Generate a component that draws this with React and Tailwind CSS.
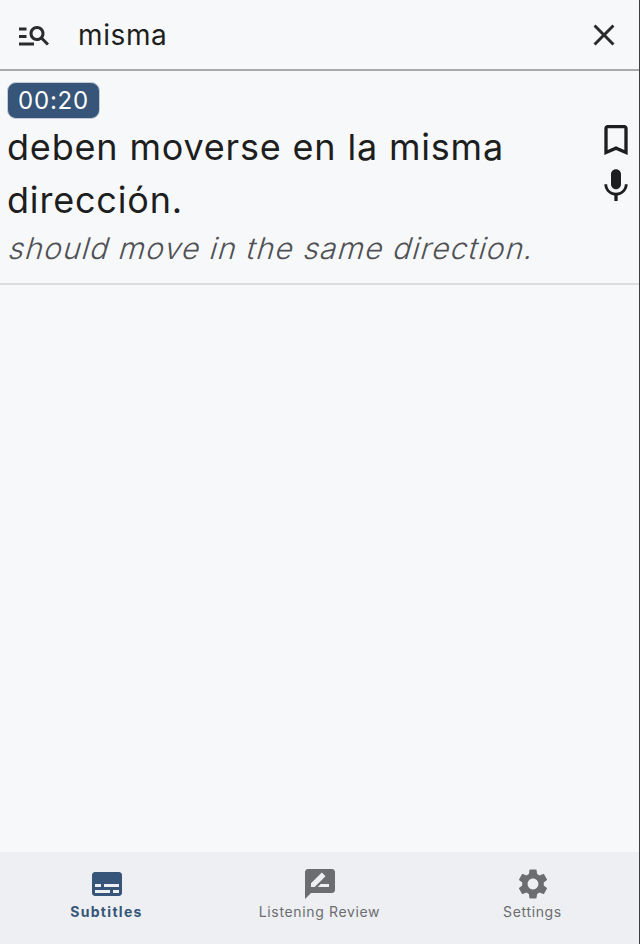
import React from "react";
import { MdManageSearch, MdClose, MdBookmarkBorder, MdMic, MdSubtitles, MdRateReview, MdSettings } from "react-icons/md";

function Tab({ icon, label, active }) {
  return (
    <div className={"flex flex-1 flex-col items-center pt-[14px] " + (active ? "text-[#365578]" : "text-[#6b6d70]")}>
      {icon}
      <span className={"text-[14px] leading-[20px] " + (active ? "font-bold tracking-[1.3px]" : "font-normal tracking-[0.65px]")}>{label}</span>
    </div>
  );
}

export default function App() {
  return (
    <div className="flex h-[944px] w-[640px] flex-col border-r border-[#3d3e40] bg-[#f7f8fa] font-['Inter',sans-serif] text-[#1d1e20]">
      <header className="flex h-[71px] items-center border-b-2 border-[#a9aaac] pl-[16px] pr-[17px]">
        <MdManageSearch size={36} className="text-[#2a2b2d]" />
        <span className="ml-[26px] flex-1 text-[28px] leading-[36px] tracking-[0.6px]">misma</span>
        <MdClose size={36} className="text-[#2a2b2d]" />
      </header>
      <section className="flex border-b-2 border-[#dcdddf] pb-[14px] pl-[7px] pr-[3px] pt-[11px]">
        <div className="flex-1">
          <span className="inline-block h-[37px] rounded-[9px] border border-[#c3ccd6] bg-[#365578] px-[10px] text-[24px] leading-[35px] tracking-[0.8px] text-white">00:20</span>
          <p className="mt-[2px] text-[36px] leading-[53px] tracking-[0.82px]">deben moverse en la misma dirección.</p>
          <p className="-ml-[3px] origin-bottom-left -skew-x-[16deg] whitespace-nowrap text-[30px] font-light leading-[42px] tracking-[1.15px] text-[#4f5154]">should move in the same direction.</p>
        </div>
        <div className="flex w-[40px] flex-col items-center pt-[38px]">
          <MdBookmarkBorder size={40} />
          <MdMic size={40} className="mt-[6px]" />
        </div>
      </section>
      <div className="flex-1" />
      <nav className="flex h-[92px] bg-[#edeff2]">
        <Tab active label="Subtitles" icon={<MdSubtitles size={36} />} />
        <Tab label="Listening Review" icon={<MdRateReview size={36} />} />
        <Tab label="Settings" icon={<MdSettings size={36} />} />
      </nav>
    </div>
  );
}
